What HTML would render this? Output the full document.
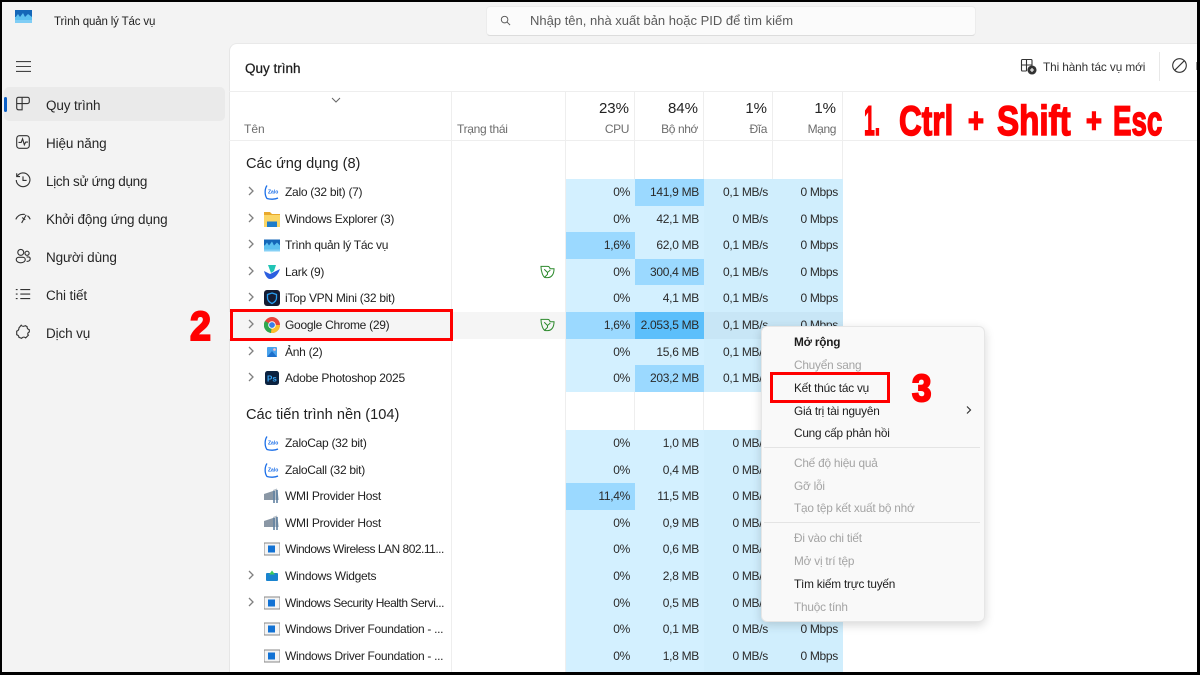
<!DOCTYPE html>
<html><head><meta charset="utf-8">
<style>
*{box-sizing:border-box}
html,body{margin:0;padding:0;width:1200px;height:675px;overflow:hidden;background:#000}
body{position:relative;font-family:"Liberation Sans","Noto Sans CJK SC",sans-serif;color:#1d1d1d}
.a,.a *{position:absolute;white-space:nowrap}
#win{position:absolute;left:2px;top:2px;width:1195px;height:670px;background:#f3f3f3;overflow:hidden}
.nav{left:46px;font-size:13.5px;line-height:18px;color:#262626;letter-spacing:-.12px}
.nv{left:14px;width:18px;height:18px;fill:none;stroke:#333;stroke-width:1.25}
.row{left:229px;width:614px;height:27px;font-size:12px;line-height:26px}
.n{left:56px;top:0;color:#222;letter-spacing:-.28px}
.ch{left:18px;top:7px;width:8px;height:10px;fill:none;stroke:#808080;stroke-width:1.3}
.i{left:35px;top:5px;width:16px;height:16px}
.c{top:0;width:69px;height:100%;text-align:right;padding-right:5px;background:#d3f0ff;color:#2a2a2a;letter-spacing:-.3px}
.c1{left:337px}.c2{left:406px}.c3{left:475px;background:#d0eefd}.c4{left:544px;background:#d0eefd;width:70px}
.m{background:#9bd9ff}.h{background:#5cbffb}
.vl{top:91px;width:1px;height:584px;background:#eeeeee}
.hd{text-align:right;color:#222;font-size:15px;line-height:18px}
.hs{text-align:right;color:#6d6d6d;font-size:12px;line-height:14px;letter-spacing:-.4px}
.mi{left:794px;font-size:11.8px;line-height:16px;color:#1d1d1d;letter-spacing:-.2px}
.dis{color:#a4a4a4}
.big{color:#f00;font-weight:bold;-webkit-text-stroke:1.5px #f00;transform-origin:0 0}
.w{font-size:42px;line-height:50px;top:96px}
.p{font-size:34px;line-height:40px;top:101px;transform:scaleX(.8)}
</style></head><body>
<div id="win"></div>
<div class="a" style="left:0;top:0;width:1200px;height:675px">

<!-- title bar -->
<svg style="left:15px;top:10px;width:17px;height:13px" viewBox="0 0 17 13"><rect width="17" height="13" fill="#7fcdf5"/><rect width="17" height="7" fill="#1467b8"/><path d="M0 8L3 4 5 7 8 3 10 7 13 4 17 7V10H0Z" fill="#5cc0f0"/></svg>
<div style="left:54px;top:14px;font-size:11.5px;line-height:16px;color:#222;letter-spacing:-.15px">Trình quản lý Tác vụ</div>
<div style="left:486px;top:6px;width:490px;height:30px;background:#fbfbfb;border:1px solid #ececec;border-bottom:1px solid #dcdcdc;border-radius:4px"></div>
<svg style="left:500px;top:15px;width:11px;height:11px;fill:none;stroke:#555;stroke-width:1" viewBox="0 0 12 12"><circle cx="5" cy="5" r="3.6"/><path d="M7.6 7.6L11 11"/></svg>
<div style="left:530px;top:12px;font-size:13px;line-height:18px;color:#5a5a5a">Nhập tên, nhà xuất bản hoặc PID để tìm kiếm</div>

<!-- sidebar -->
<svg style="left:16px;top:61px;width:15px;height:11px;stroke:#444;stroke-width:1.1" viewBox="0 0 15 11"><path d="M0 .6H15M0 5.5H15M0 10.4H15"/></svg>
<div style="left:4px;top:87px;width:221px;height:34px;background:#eaeaea;border-radius:5px"></div>
<div style="left:4px;top:97px;width:3px;height:15px;background:#0b5fc6;border-radius:2px"></div>
<svg class="nv" style="top:95px" viewBox="0 0 20 20"><path d="M3 4.5a2 2 0 0 1 2-2h4v7H3ZM9 2.5h6a2 2 0 0 1 2 2v3a2 2 0 0 1-2 2H3v5a2 2 0 0 0 2 2h4V2.5"/></svg>
<svg class="nv" style="top:133px" viewBox="0 0 20 20"><rect x="3" y="3" width="14" height="14" rx="3"/><path d="M5 10.5H8L9.500 6.500 11.500 13 13 10H15.500"/></svg>
<svg class="nv" style="top:171px" viewBox="0 0 20 20"><path d="M3.500 6A7.600 7.600 0 1 1 2.500 10M3 2.500V6.200H6.700M10 6V10.500H14"/></svg>
<svg class="nv" style="top:209px" viewBox="0 0 20 20"><path d="M2 11.500C4 7 8 5.500 12 6M15 7.500C16.500 8.500 17.500 10 18 11.500M8.500 15.500L13.500 6.500M9 9.500L12.500 12"/></svg>
<svg class="nv" style="top:247px" viewBox="0 0 20 20"><circle cx="7.500" cy="6" r="3.300"/><circle cx="14.500" cy="7" r="2.300"/><path d="M2.500 14a2.500 2.500 0 0 1 2.500-2.500h5a2.500 2.500 0 0 1 2.500 2.500c0 2-2 3.500-5 3.500s-5-1.500-5-3.500ZM14 11h2a2 2 0 0 1 2 2c0 2-1.500 3-4 3"/></svg>
<svg class="nv" style="top:285px" viewBox="0 0 20 20"><path d="M7 5H18M7 10H18M7 15H18M2 5H4M2 10H4M2 15H4"/></svg>
<svg class="nv" style="top:323px" viewBox="0 0 20 20"><path d="M8 2.500c1 1.500 3 1.500 4.500.5l2 1c0 1.500 1 3 2.500 3.500v2.500c-1.500.5-2.500 2-1 3.500l-3 3c-1.500-1-3.500-1-4.500.5l-3-1c0-1.500-1-2.500-2.500-3V9c1.500-.5 2.500-2 2.500-3.500Z"/></svg>
<div class="nav" style="top:97px">Quy trình</div>
<div class="nav" style="top:135px">Hiệu năng</div>
<div class="nav" style="top:173px;letter-spacing:-.3px">Lịch sử ứng dụng</div>
<div class="nav" style="top:211px">Khởi động ứng dụng</div>
<div class="nav" style="top:249px">Người dùng</div>
<div class="nav" style="top:287px">Chi tiết</div>
<div class="nav" style="top:325px">Dịch vụ</div>

<!-- main panel -->
<div style="left:229px;top:43px;width:968px;height:632px;background:#fff;border-top-left-radius:8px;border-left:1px solid #e6e6e6;border-top:1px solid #e9e9e9"></div>
<div style="left:245px;top:60px;font-size:13.5px;line-height:18px;color:#1f1f1f;-webkit-text-stroke:.25px #1f1f1f">Quy trình</div>
<svg style="left:1020px;top:58px;width:17px;height:17px;fill:none;stroke:#333;stroke-width:1.100" viewBox="0 0 17 17"><path d="M1.500 2.500a1 1 0 0 1 1-1H11a1 1 0 0 1 1 1V7H1.500ZM6.500 1.500V13M1.500 7V12a1 1 0 0 0 1 1h4"/><circle cx="12" cy="12" r="4" fill="#333"/><path d="M10 12H14M12 10V14" stroke="#fff"/></svg>
<div style="left:1043px;top:59px;font-size:11.800px;line-height:16px;color:#333;letter-spacing:-.1px">Thi hành tác vụ mới</div>
<div style="left:1159px;top:52px;width:1px;height:29px;background:#e8e8e8"></div>
<svg style="left:1172px;top:58px;width:15px;height:15px;fill:none;stroke:#333;stroke-width:1.100" viewBox="0 0 15 15"><circle cx="7.500" cy="7.500" r="6.800"/><path d="M2.800 12.200L12.200 2.800"/></svg>
<div style="left:1196px;top:62px;width:1px;height:8px;background:#999"></div>

<div style="left:229px;top:91px;width:968px;height:1px;background:#eee"></div>
<div style="left:229px;top:140px;width:968px;height:1px;background:#eee"></div>
<div class="vl" style="left:451px"></div><div class="vl" style="left:565px"></div><div class="vl" style="left:634px"></div><div class="vl" style="left:703px"></div><div class="vl" style="left:772px"></div><div class="vl" style="left:842px"></div>

<svg style="left:331px;top:97px;width:10px;height:6px;fill:none;stroke:#666;stroke-width:1" viewBox="0 0 10 6"><path d="M1 1L5 5 9 1"/></svg>
<div class="hs" style="left:244px;top:122px;text-align:left;letter-spacing:0">Tên</div>
<div class="hs" style="left:457px;top:122px;text-align:left;letter-spacing:-.3px">Trạng thái</div>
<div class="hd" style="left:560px;width:69px;top:100px">23%</div><div class="hs" style="left:560px;width:69px;top:122px">CPU</div>
<div class="hd" style="left:629px;width:69px;top:100px">84%</div><div class="hs" style="left:629px;width:69px;top:122px">Bộ nhớ</div>
<div class="hd" style="left:698px;width:69px;top:100px">1%</div><div class="hs" style="left:698px;width:69px;top:122px">Đĩa</div>
<div class="hd" style="left:767px;width:69px;top:100px">1%</div><div class="hs" style="left:767px;width:69px;top:122px">Mạng</div>

<div style="left:246px;top:155px;font-size:14.600px;line-height:18px;color:#222">Các ứng dụng (8)</div>
<div style="left:246px;top:406px;font-size:14.600px;line-height:18px;color:#222">Các tiến trình nền (104)</div>

<!-- app rows -->
<div class="row" style="top:179px"><svg class="ch" viewBox="0 0 8 10"><path d="M2 1L6 5 2 9"/></svg><svg class="i" viewBox="0 0 16 16" fill="none" stroke="#1a6ee8" stroke-width="1.300"><path d="M3 1.500C.5 5 .5 11 3 14.500 6 15.500 11 15.500 14 14"/><text x="4" y="9.500" font-size="5" font-weight="bold" stroke="none" fill="#1a6ee8">Zalo</text></svg><div class="n">Zalo (32 bit) (7)</div><div class="c c1">0%</div><div class="c c2 m">141,9 MB</div><div class="c c3">0,1 MB/s</div><div class="c c4">0 Mbps</div></div>
<div class="row" style="top:205.600px"><svg class="ch" viewBox="0 0 8 10"><path d="M2 1L6 5 2 9"/></svg><svg class="i" viewBox="0 0 16 16"><path d="M0 1H6L8 3H16V16H0Z" fill="#e9a92c"/><rect x="0" y="4" width="16" height="12" fill="#fbd666"/><rect x="3" y="10.500" width="10" height="5.500" fill="#1f7cc9"/></svg><div class="n">Windows Explorer (3)</div><div class="c c1">0%</div><div class="c c2">42,1 MB</div><div class="c c3">0 MB/s</div><div class="c c4">0 Mbps</div></div>
<div class="row" style="top:232.200px"><svg class="ch" viewBox="0 0 8 10"><path d="M2 1L6 5 2 9"/></svg><svg class="i" viewBox="0 0 16 13"><rect width="16" height="12" y="1" fill="#86d0f5"/><rect width="16" height="6" y="1" fill="#1467b8"/><path d="M0 8L3 4 5 7 8 3 10 7 13 4 16 7V11H0Z" fill="#5cc0f0"/></svg><div class="n">Trình quản lý Tác vụ</div><div class="c c1 m">1,6%</div><div class="c c2">62,0 MB</div><div class="c c3">0,1 MB/s</div><div class="c c4">0 Mbps</div></div>
<div class="row" style="top:258.800px"><svg class="ch" viewBox="0 0 8 10"><path d="M2 1L6 5 2 9"/></svg><svg class="i" viewBox="0 0 16 16"><path d="M4 1H12L10 7 7 9Z" fill="#21c4b5"/><path d="M0 7L6 10 10 8 16 5C14 11 10 15 6 15 3 15 1 11 0 7Z" fill="#2c5fe0"/></svg><div class="n">Lark (9)</div><svg style="left:311px;top:6px;width:15px;height:14px;fill:none;stroke:#2d8a2d;stroke-width:1.100" viewBox="0 0 16 15"><path d="M1 1.500H8C9.500 1.500 10.500 2.500 10.700 4H15C15 9 13 13.500 8 13.500H6C3 13.500 1 6 1 1.500Z"/><path d="M4.500 4.500L8 8 11 5.500M8 8V10L4.500 13.500"/></svg><div class="c c1">0%</div><div class="c c2 m">300,4 MB</div><div class="c c3">0,1 MB/s</div><div class="c c4">0 Mbps</div></div>
<div class="row" style="top:285.400px"><svg class="ch" viewBox="0 0 8 10"><path d="M2 1L6 5 2 9"/></svg><svg class="i" viewBox="0 0 16 16"><rect width="16" height="16" rx="3" fill="#141c33"/><path d="M8 3L12.500 4.500V8C12.500 11 10 12.500 8 13.500 6 12.500 3.500 11 3.500 8V4.500Z" fill="none" stroke="#2a9df0" stroke-width="1.300"/></svg><div class="n">iTop VPN Mini (32 bit)</div><div class="c c1">0%</div><div class="c c2">4,1 MB</div><div class="c c3">0,1 MB/s</div><div class="c c4">0 Mbps</div></div>
<div class="row" style="top:312px"><div style="left:0;top:0;width:336px;height:27px;background:#f5f5f5"></div><svg class="ch" viewBox="0 0 8 10"><path d="M2 1L6 5 2 9"/></svg><svg class="i" viewBox="0 0 16 16"><circle cx="8" cy="8" r="8" fill="#e8453c"/><path d="M8 8L1 4A8 8 0 0 0 7 16Z" fill="#2fa84f"/><path d="M8 8H16A8 8 0 0 1 7 16Z" fill="#fbc02d"/><circle cx="8" cy="8" r="3.800" fill="#fff"/><circle cx="8" cy="8" r="2.900" fill="#3b7de8"/></svg><div class="n">Google Chrome (29)</div><svg style="left:311px;top:6px;width:15px;height:14px;fill:none;stroke:#2d8a2d;stroke-width:1.100" viewBox="0 0 16 15"><path d="M1 1.500H8C9.500 1.500 10.500 2.500 10.700 4H15C15 9 13 13.500 8 13.500H6C3 13.500 1 6 1 1.500Z"/><path d="M4.500 4.500L8 8 11 5.500M8 8V10L4.500 13.500"/></svg><div class="c c1 m">1,6%</div><div class="c c2 h">2.053,5 MB</div><div class="c c3" style="background:#c8e6f6">0,1 MB/s</div><div class="c c4" style="background:#c8e6f6">0 Mbps</div></div>
<div class="row" style="top:338.600px"><svg class="ch" viewBox="0 0 8 10"><path d="M2 1L6 5 2 9"/></svg><svg class="i" viewBox="0 0 16 16"><rect x="3" y="3" width="10" height="10" rx="1" fill="#4aa3ec"/><path d="M3 13L8 7 13 13Z" fill="#1d6fcb"/><circle cx="10.500" cy="5.500" r="1.300" fill="#ffc0cc"/></svg><div class="n">Ảnh (2)</div><div class="c c1">0%</div><div class="c c2">15,6 MB</div><div class="c c3">0,1 MB/s</div><div class="c c4">0 Mbps</div></div>
<div class="row" style="top:365.200px"><svg class="ch" viewBox="0 0 8 10"><path d="M2 1L6 5 2 9"/></svg><svg class="i" viewBox="0 0 16 16"><rect x="1" y="1" width="14" height="14" rx="2.500" fill="#0b2240"/><text x="3" y="11.500" font-size="8" font-weight="bold" fill="#39a6f5" font-family="Liberation Sans">Ps</text></svg><div class="n">Adobe Photoshop 2025</div><div class="c c1">0%</div><div class="c c2 m">203,2 MB</div><div class="c c3">0,1 MB/s</div><div class="c c4">0 Mbps</div></div>

<!-- background rows -->
<div class="row" style="top:430px"><svg class="i" viewBox="0 0 16 16" fill="none" stroke="#1a6ee8" stroke-width="1.300"><path d="M3 1.500C.5 5 .5 11 3 14.500 6 15.500 11 15.500 14 14"/><text x="4" y="9.500" font-size="5" font-weight="bold" stroke="none" fill="#1a6ee8">Zalo</text></svg><div class="n">ZaloCap (32 bit)</div><div class="c c1">0%</div><div class="c c2">1,0 MB</div><div class="c c3">0 MB/s</div><div class="c c4">0 Mbps</div></div>
<div class="row" style="top:456.600px"><svg class="i" viewBox="0 0 16 16" fill="none" stroke="#1a6ee8" stroke-width="1.300"><path d="M3 1.500C.5 5 .5 11 3 14.500 6 15.500 11 15.500 14 14"/><text x="4" y="9.500" font-size="5" font-weight="bold" stroke="none" fill="#1a6ee8">Zalo</text></svg><div class="n">ZaloCall (32 bit)</div><div class="c c1">0%</div><div class="c c2">0,4 MB</div><div class="c c3">0 MB/s</div><div class="c c4">0 Mbps</div></div>
<div class="row" style="top:483.200px"><svg class="i" viewBox="0 0 16 16"><path d="M0 6L9 3V12H0Z" fill="#8a97a5"/><path d="M9 2L13 0.500 15 12H9Z" fill="#b7c0c9"/><path d="M10 3V15M13 2V15" stroke="#4a6f93" stroke-width="1.400"/></svg><div class="n">WMI Provider Host</div><div class="c c1 m">11,4%</div><div class="c c2">11,5 MB</div><div class="c c3">0 MB/s</div><div class="c c4">0 Mbps</div></div>
<div class="row" style="top:509.800px"><svg class="i" viewBox="0 0 16 16"><path d="M0 6L9 3V12H0Z" fill="#8a97a5"/><path d="M9 2L13 0.500 15 12H9Z" fill="#b7c0c9"/><path d="M10 3V15M13 2V15" stroke="#4a6f93" stroke-width="1.400"/></svg><div class="n">WMI Provider Host</div><div class="c c1">0%</div><div class="c c2">0,9 MB</div><div class="c c3">0 MB/s</div><div class="c c4">0 Mbps</div></div>
<div class="row" style="top:536.400px"><svg class="i" viewBox="0 0 16 16"><rect y="2" width="16" height="12" fill="#f4f4f4" stroke="#888"/><rect x="4" y="4.500" width="7" height="7" fill="#1272d4"/></svg><div class="n" style="letter-spacing:-.5px">Windows Wireless LAN 802.11...</div><div class="c c1">0%</div><div class="c c2">0,6 MB</div><div class="c c3">0 MB/s</div><div class="c c4">0 Mbps</div></div>
<div class="row" style="top:563px"><svg class="ch" viewBox="0 0 8 10"><path d="M2 1L6 5 2 9"/></svg><svg class="i" viewBox="0 0 16 16"><rect x="2" y="5" width="12" height="8" rx="1" fill="#1a84cf"/><path d="M8 2.500L11 6.500H5Z" fill="#3fc95f"/></svg><div class="n">Windows Widgets</div><div class="c c1">0%</div><div class="c c2">2,8 MB</div><div class="c c3">0 MB/s</div><div class="c c4">0 Mbps</div></div>
<div class="row" style="top:589.600px"><svg class="ch" viewBox="0 0 8 10"><path d="M2 1L6 5 2 9"/></svg><svg class="i" viewBox="0 0 16 16"><rect y="2" width="16" height="12" fill="#f4f4f4" stroke="#888"/><rect x="4" y="4.500" width="7" height="7" fill="#1272d4"/></svg><div class="n" style="letter-spacing:-.47px">Windows Security Health Servi...</div><div class="c c1">0%</div><div class="c c2">0,5 MB</div><div class="c c3">0 MB/s</div><div class="c c4">0 Mbps</div></div>
<div class="row" style="top:616.200px"><svg class="i" viewBox="0 0 16 16"><rect y="2" width="16" height="12" fill="#f4f4f4" stroke="#888"/><rect x="4" y="4.500" width="7" height="7" fill="#1272d4"/></svg><div class="n" style="letter-spacing:-.32px">Windows Driver Foundation - ...</div><div class="c c1">0%</div><div class="c c2">0,1 MB</div><div class="c c3">0 MB/s</div><div class="c c4">0 Mbps</div></div>
<div class="row" style="top:642.800px;height:30px"><svg class="i" viewBox="0 0 16 16"><rect y="2" width="16" height="12" fill="#f4f4f4" stroke="#888"/><rect x="4" y="4.500" width="7" height="7" fill="#1272d4"/></svg><div class="n" style="letter-spacing:-.32px">Windows Driver Foundation - ...</div><div class="c c1">0%</div><div class="c c2">1,8 MB</div><div class="c c3">0 MB/s</div><div class="c c4">0 Mbps</div></div>

<!-- context menu -->
<div style="left:761px;top:326px;width:224px;height:296px;background:#f9f9f9;border:1px solid #e6e6e6;border-radius:6px;box-shadow:0 3px 10px rgba(0,0,0,.16)"></div>
<div class="mi" style="top:334px;font-weight:bold">Mở rộng</div>
<div class="mi dis" style="top:357px">Chuyển sang</div>
<div class="mi" style="top:380px">Kết thúc tác vụ</div>
<div class="mi" style="top:403px">Giá trị tài nguyên</div>
<svg style="left:966px;top:405px;width:6px;height:10px;fill:none;stroke:#333;stroke-width:1.200" viewBox="0 0 6 10"><path d="M1 1.500L4.500 5 1 8.500"/></svg>
<div class="mi" style="top:425px">Cung cấp phản hồi</div>
<div style="left:764px;top:447px;width:216px;height:1px;background:#e4e4e4"></div>
<div class="mi dis" style="top:455px">Chế độ hiệu quả</div>
<div class="mi dis" style="top:478px">Gỡ lỗi</div>
<div class="mi dis" style="top:500px">Tạo tệp kết xuất bộ nhớ</div>
<div style="left:764px;top:522px;width:216px;height:1px;background:#e4e4e4"></div>
<div class="mi dis" style="top:530px">Đi vào chi tiết</div>
<div class="mi dis" style="top:553px">Mở vị trí tệp</div>
<div class="mi" style="top:576px">Tìm kiếm trực tuyến</div>
<div class="mi dis" style="top:599px">Thuộc tính</div>

<!-- annotations -->
<div style="left:230px;top:309px;width:223px;height:32px;border:3.500px solid #f00"></div>
<div style="left:770px;top:372px;width:120px;height:31px;border:3.500px solid #f00"></div>
<div class="big" style="left:190px;top:303px;font-size:41px;line-height:46px;transform:scaleX(.92);-webkit-text-stroke-width:2px">2</div>
<div class="big" style="left:912px;top:367px;font-size:38px;line-height:44px;transform:scaleX(.92);-webkit-text-stroke-width:2px">3</div>
<div class="big w" style="left:864px;transform:scaleX(.46)">1.</div>
<div class="big w" style="left:899px;transform:scaleX(.75)">Ctrl</div>
<div class="big p" style="left:968px">+</div>
<div class="big w" style="left:997px;transform:scaleX(.79)">Shift</div>
<div class="big p" style="left:1086px">+</div>
<div class="big w" style="left:1113px;transform:scaleX(.66)">Esc</div>
<div style="left:0;top:672px;width:1200px;height:3px;background:#000"></div>
</div>
</body></html>
